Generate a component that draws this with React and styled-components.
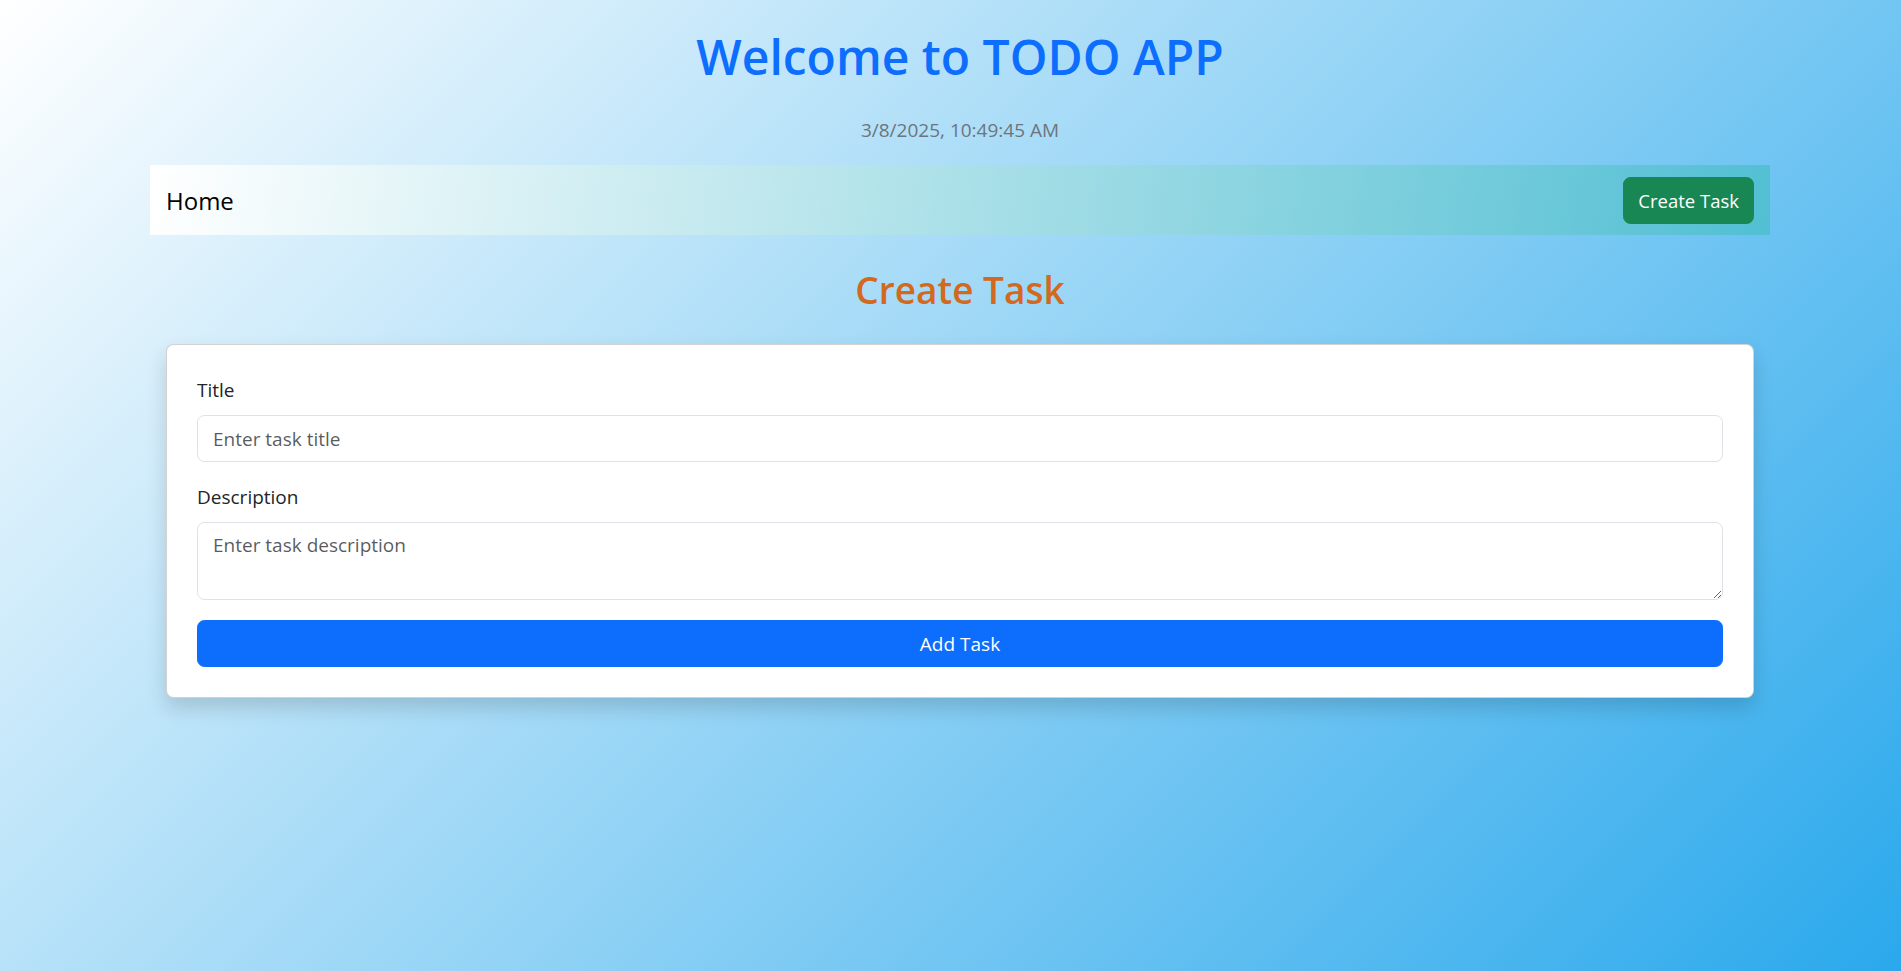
import React from "react";
import styled, { createGlobalStyle } from "styled-components";

const GlobalStyle = createGlobalStyle`
    html, body {
        margin: 0;
        padding: 0;
        overflow-x: hidden;
    }

    body {
        font-family: "Open Sans", "Noto Sans", sans-serif;
        font-size: 20px;
        line-height: 1.5;
        color: #212529;
    }

    *, *::before, *::after {
        box-sizing: border-box;
    }
`

const SPage = styled.div`
    width: 1920px;
    min-height: 100vh;
    background: linear-gradient(135deg, #ffffff 0%, #29a8ec 100%);
`

const SContainer = styled.div`
    width: 1650px;
    margin: 0 auto;
    padding: 27px 15px 40px;
`

const STitle = styled.h1`
    margin: 0 0 28px;
    text-align: center;
    font-size: 48px;
    font-weight: 600;
    line-height: 60px;
    color: #0d6efd;
`

const SDate = styled.p`
    margin: 0 0 20px;
    text-align: center;
    font-size: 19px;
    line-height: 30px;
    color: #6c757d;
`

const SNavbar = styled.nav`
    display: flex;
    align-items: center;
    justify-content: space-between;
    height: 70px;
    padding: 10px 16px;
    background: linear-gradient(100deg, #ffffff 0%, #b3e3ea 45%, #52bfd3 100%);

    a.brand {
        font-size: 24px;
        line-height: 37px;
        color: #000;
        text-decoration: none;
    }
`

const SButton = styled.button`
    display: block;
    height: 47px;
    padding: 0 ${({ $block }) => ($block ? "15px" : "14px")};
    border: 1px solid ${({ $color }) => $color};
    border-radius: 7.5px;
    background: ${({ $color }) => $color};
    color: #fff;
    font-family: inherit;
    font-size: ${({ $block }) => ($block ? "19px" : "18.5px")};
    cursor: pointer;
    width: ${({ $block }) => ($block ? "100%" : "auto")};
`

const SHeading = styled.h2`
    margin: 31px 0 30px;
    text-align: center;
    font-size: 37px;
    font-weight: 600;
    line-height: 48px;
    color: #d2691e;
`

const SCard = styled.div`
    margin: 0 16px;
    padding: 30px;
    background: #fff;
    border: 1px solid rgba(0, 0, 0, 0.175);
    border-radius: 7.5px;
    box-shadow: 0 10px 20px rgba(0, 0, 0, 0.15);
`

const SField = styled.div`
    margin-bottom: 20px;

    label {
        display: block;
        margin-bottom: 10px;
        font-size: 19px;
        line-height: 30px;
    }

    input, textarea {
        display: block;
        width: 100%;
        padding: 7px 15px;
        border: 1px solid #dee2e6;
        border-radius: 7.5px;
        font-family: inherit;
        font-size: 19px;
        line-height: 30px;
        color: #212529;
        background: #fff;
        outline: none;
    }

    input {
        height: 47px;
    }

    textarea {
        height: 78px;
        resize: vertical;
    }

    ::placeholder {
        color: rgba(33, 37, 41, 0.75);
    }
`

const App = () => (
    <SPage>
        <GlobalStyle />
        <SContainer>
            <STitle>Welcome to TODO APP</STitle>
            <SDate>3/8/2025, 10:49:45 AM</SDate>

            <SNavbar>
                <a className="brand" href="#">Home</a>
                <SButton $color="#198754">Create Task</SButton>
            </SNavbar>

            <SHeading>Create Task</SHeading>

            <SCard>
                <form onSubmit={(e) => e.preventDefault()}>
                    <SField>
                        <label htmlFor="title">Title</label>
                        <input id="title" type="text" placeholder="Enter task title" />
                    </SField>
                    <SField>
                        <label htmlFor="description">Description</label>
                        <textarea id="description" rows={2} placeholder="Enter task description" />
                    </SField>
                    <SButton type="submit" $color="#0d6efd" $block>Add Task</SButton>
                </form>
            </SCard>
        </SContainer>
    </SPage>
);

export default App;
